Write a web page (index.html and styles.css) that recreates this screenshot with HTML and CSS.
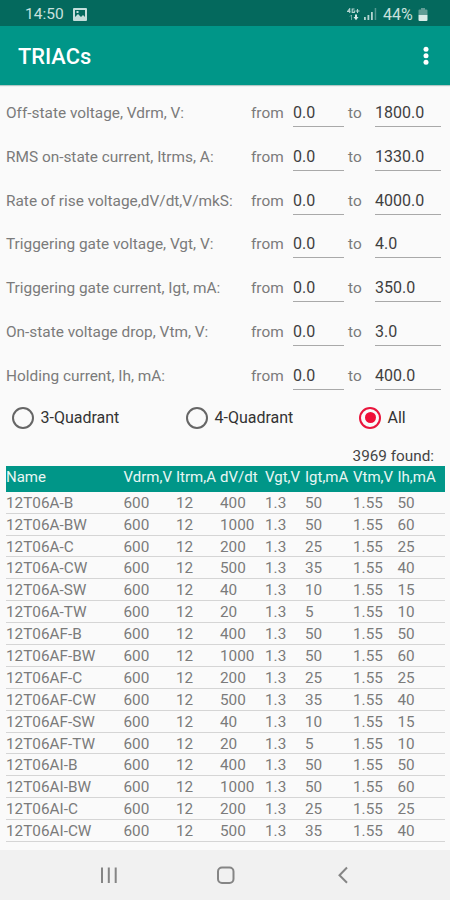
FILE: index.html
```
<!DOCTYPE html>
<html lang="en">
<head>
<meta charset="utf-8">
<title>TRIACs</title>
<link rel="stylesheet" href="styles.css">
</head>
<body>
<header class="status">
  <span class="clock">14:50</span>
  <svg class="picture" width="14" height="13" viewBox="0 0 14 13"><path fill="#c4dedb" fill-rule="evenodd" d="M1 0h12a1 1 0 0 1 1 1v11a1 1 0 0 1-1 1H1a1 1 0 0 1-1-1V1a1 1 0 0 1 1-1zM2 2v7l3-3 3 3 2-2 2 2V2zM3.5 3h2v2h-2z"/></svg>
  <svg class="network" width="13" height="13" viewBox="0 0 13 13" fill="none" stroke="#b5d5d1"><path stroke-width="1.1" d="M2.7 5V.7L.5 3.5h3M7.500 1H5.200v3.500h2.200V3H6.500M8.500 3h4M10.500 1v4"/><path stroke-width="1" opacity=".6" d="M4.500 12V7M3 8.500 4.500 7"/><path fill="#d7ebe8" stroke="none" d="M8 6.500h2V9h1.500L9 12.300 6.500 9H8z"/></svg>
  <svg class="signal" width="13" height="12" viewBox="0 0 13 12" fill="#b5d5d1"><path d="M0 9h1.800v3H0zM3.500 7h1.800v5H3.500zM7 4h1.800v8H7z"/><path opacity=".45" d="M10.700 0h1.500v12h-1.500z"/></svg>
  <span class="percent">44%</span>
  <svg class="battery" width="10" height="13" viewBox="0 0 10 13"><path fill="#609d96" d="M3 0h4v1.500h1.500a1 1 0 0 1 1 1V7h-9V2.500a1 1 0 0 1 1-1H3z"/><path fill="#d9ece9" d="M.5 7h9v5a1 1 0 0 1-1 1h-7a1 1 0 0 1-1-1z"/></svg>
</header>
<div class="appbar">
  <h1>TRIACs</h1>
  <svg width="6" height="20" viewBox="0 0 6 20" fill="#fff"><circle cx="3" cy="3.300" r="2.500"/><circle cx="3" cy="9.800" r="2.500"/><circle cx="3" cy="16.200" r="2.500"/></svg>
</div>
<main>
  <section class="filters" id="filters"></section>
  <div class="radios">
    <label><i class="radio"></i>3-Quadrant</label>
    <label><i class="radio"></i>4-Quadrant</label>
    <label><i class="radio on"></i>All</label>
  </div>
  <div class="found">3969 found:</div>
  <section class="table" id="table"></section>
</main>
<nav>
  <svg width="450" height="50" viewBox="0 0 450 50" fill="none" stroke="#858585"><path stroke-width="2" d="M102 17.500v15.500M108.800 17.500v15.500M115.700 17.500v15.500"/><rect x="218" y="17.500" width="15.500" height="15.500" rx="4" stroke-width="2"/><path stroke-width="2" d="M347 17.500 339.500 25.200l7.500 7.500"/></svg>
</nav>
<script src="data.js"></script>
</body>
</html>
```
FILE: styles.css
```
* { box-sizing: border-box; }
body {
  margin: 0;
  width: 450px;
  height: 900px;
  display: flex;
  flex-direction: column;
  overflow: hidden;
  background: #fafafa;
  color: #7b7b7b;
  font-family: Roboto, sans-serif;
  font-size: 15px;
}
svg { display: block; flex: none; }
.status {
  height: 26px;
  flex: none;
  display: flex;
  align-items: center;
  padding: 2px 22px 0 25px;
  background: #04695d;
  color: #c9e1de;
}
.clock { width: 40px; font-size: 15.5px; }
.picture { margin-left: 8px; }
.network { margin-left: auto; }
.signal { margin-left: 4px; }
.percent { width: 31px; margin-left: 6px; font-size: 16px; }
.battery { margin-left: 4px; }
.appbar {
  height: 59px;
  flex: none;
  display: flex;
  align-items: center;
  justify-content: space-between;
  padding: 0 21px 0 18px;
  background: #009688;
  color: #fff;
  box-shadow: 0 1px 1px #b4c8c6;
}
.appbar h1 {
  margin: 2px 0 0;
  font-size: 21.8px;
  font-weight: 500;
}
main { flex: 1; }
.filters { padding-top: 6px; }
.filter {
  height: 43.83px;
  display: grid;
  grid-template-columns: 245px 42px 55px 27px 66px;
  align-items: start;
  padding: 13px 0 0 6px;
  line-height: 18px;
  font-size: 15.4px;
}
.field {
  height: 23px;
  font-size: 16px;
  color: #3f3f3f;
  border-bottom: 1.500px solid #a9a9a9;
}
.from { width: 51px; }
.radios {
  height: 34px;
  display: grid;
  grid-template-columns: 174px 173px 1fr;
  align-items: center;
  padding-left: 12px;
  margin-top: 3px;
  font-size: 16px;
  color: #333;
}
.radios label { display: flex; align-items: center; gap: 6.5px; }
.radio {
  width: 22px;
  height: 22px;
  border: 2px solid #666;
  border-radius: 50%;
  display: grid;
  place-items: center;
}
.radio.on { border-color: #e9153c; }
.radio.on::after {
  content: "";
  width: 11px;
  height: 11px;
  border-radius: 50%;
  background: #f00f38;
}
.found {
  height: 30px;
  padding: 12px 16px 0 0;
  line-height: 18px;
  text-align: right;
  font-size: 15.3px;
  color: #444;
}
.table { margin: 1px 5px 0 6px; }
.row {
  height: 21.9px;
  display: grid;
  grid-template-columns: 117.500px 52.500px 44px 45px 40px 48px 44.500px 1fr;
  line-height: 22px;
  white-space: nowrap;
  font-size: 15.3px;
  border-bottom: 1px solid #d5d5d5;
}
.row.head {
  height: 26px;
  line-height: 23px;
  font-size: 15px;
  background: #009688;
  color: #e9f6f4;
  border: 0;
}
nav { height: 50px; flex: none; background: #f1f1f1; }
```
FILE: data.js
```
const filters = [
  ["Off-state voltage, Vdrm, V:", "1800.0"],
  ["RMS on-state current, Itrms, A:", "1330.0"],
  ["Rate of rise voltage,dV/dt,V/mkS:", "4000.0"],
  ["Triggering gate voltage, Vgt, V:", "4.0"],
  ["Triggering gate current, Igt, mA:", "350.0"],
  ["On-state voltage drop, Vtm, V:", "3.0"],
  ["Holding current, Ih, mA:", "400.0"]
];
document.getElementById("filters").innerHTML = filters.map(([label, max]) =>
  `<div class="filter"><span>${label}</span><span>from</span><span class="field from">0.0</span><span>to</span><span class="field">${max}</span></div>`
).join("");

const ratings = {
  B: ["400", "50", "50"],
  BW: ["1000", "50", "60"],
  C: ["200", "25", "25"],
  CW: ["500", "35", "40"],
  SW: ["40", "10", "15"],
  TW: ["20", "5", "10"]
};
const series = [
  ["12T06A", ["B", "BW", "C", "CW", "SW", "TW"]],
  ["12T06AF", ["B", "BW", "C", "CW", "SW", "TW"]],
  ["12T06AI", ["B", "BW", "C", "CW"]]
];
const row = (cells, extra = "") =>
  `<div class="row${extra}">${cells.map(c => `<span>${c}</span>`).join("")}</div>`;
let html = row(["Name", "Vdrm,V", "Itrm,A", "dV/dt", "Vgt,V", "Igt,mA", "Vtm,V", "Ih,mA"], " head");
for (const [name, grades] of series)
  for (const g of grades) {
    const [rise, igt, ih] = ratings[g];
    html += row([`${name}-${g}`, "600", "12", rise, "1.3", igt, "1.55", ih]);
  }
document.getElementById("table").innerHTML = html;
```
